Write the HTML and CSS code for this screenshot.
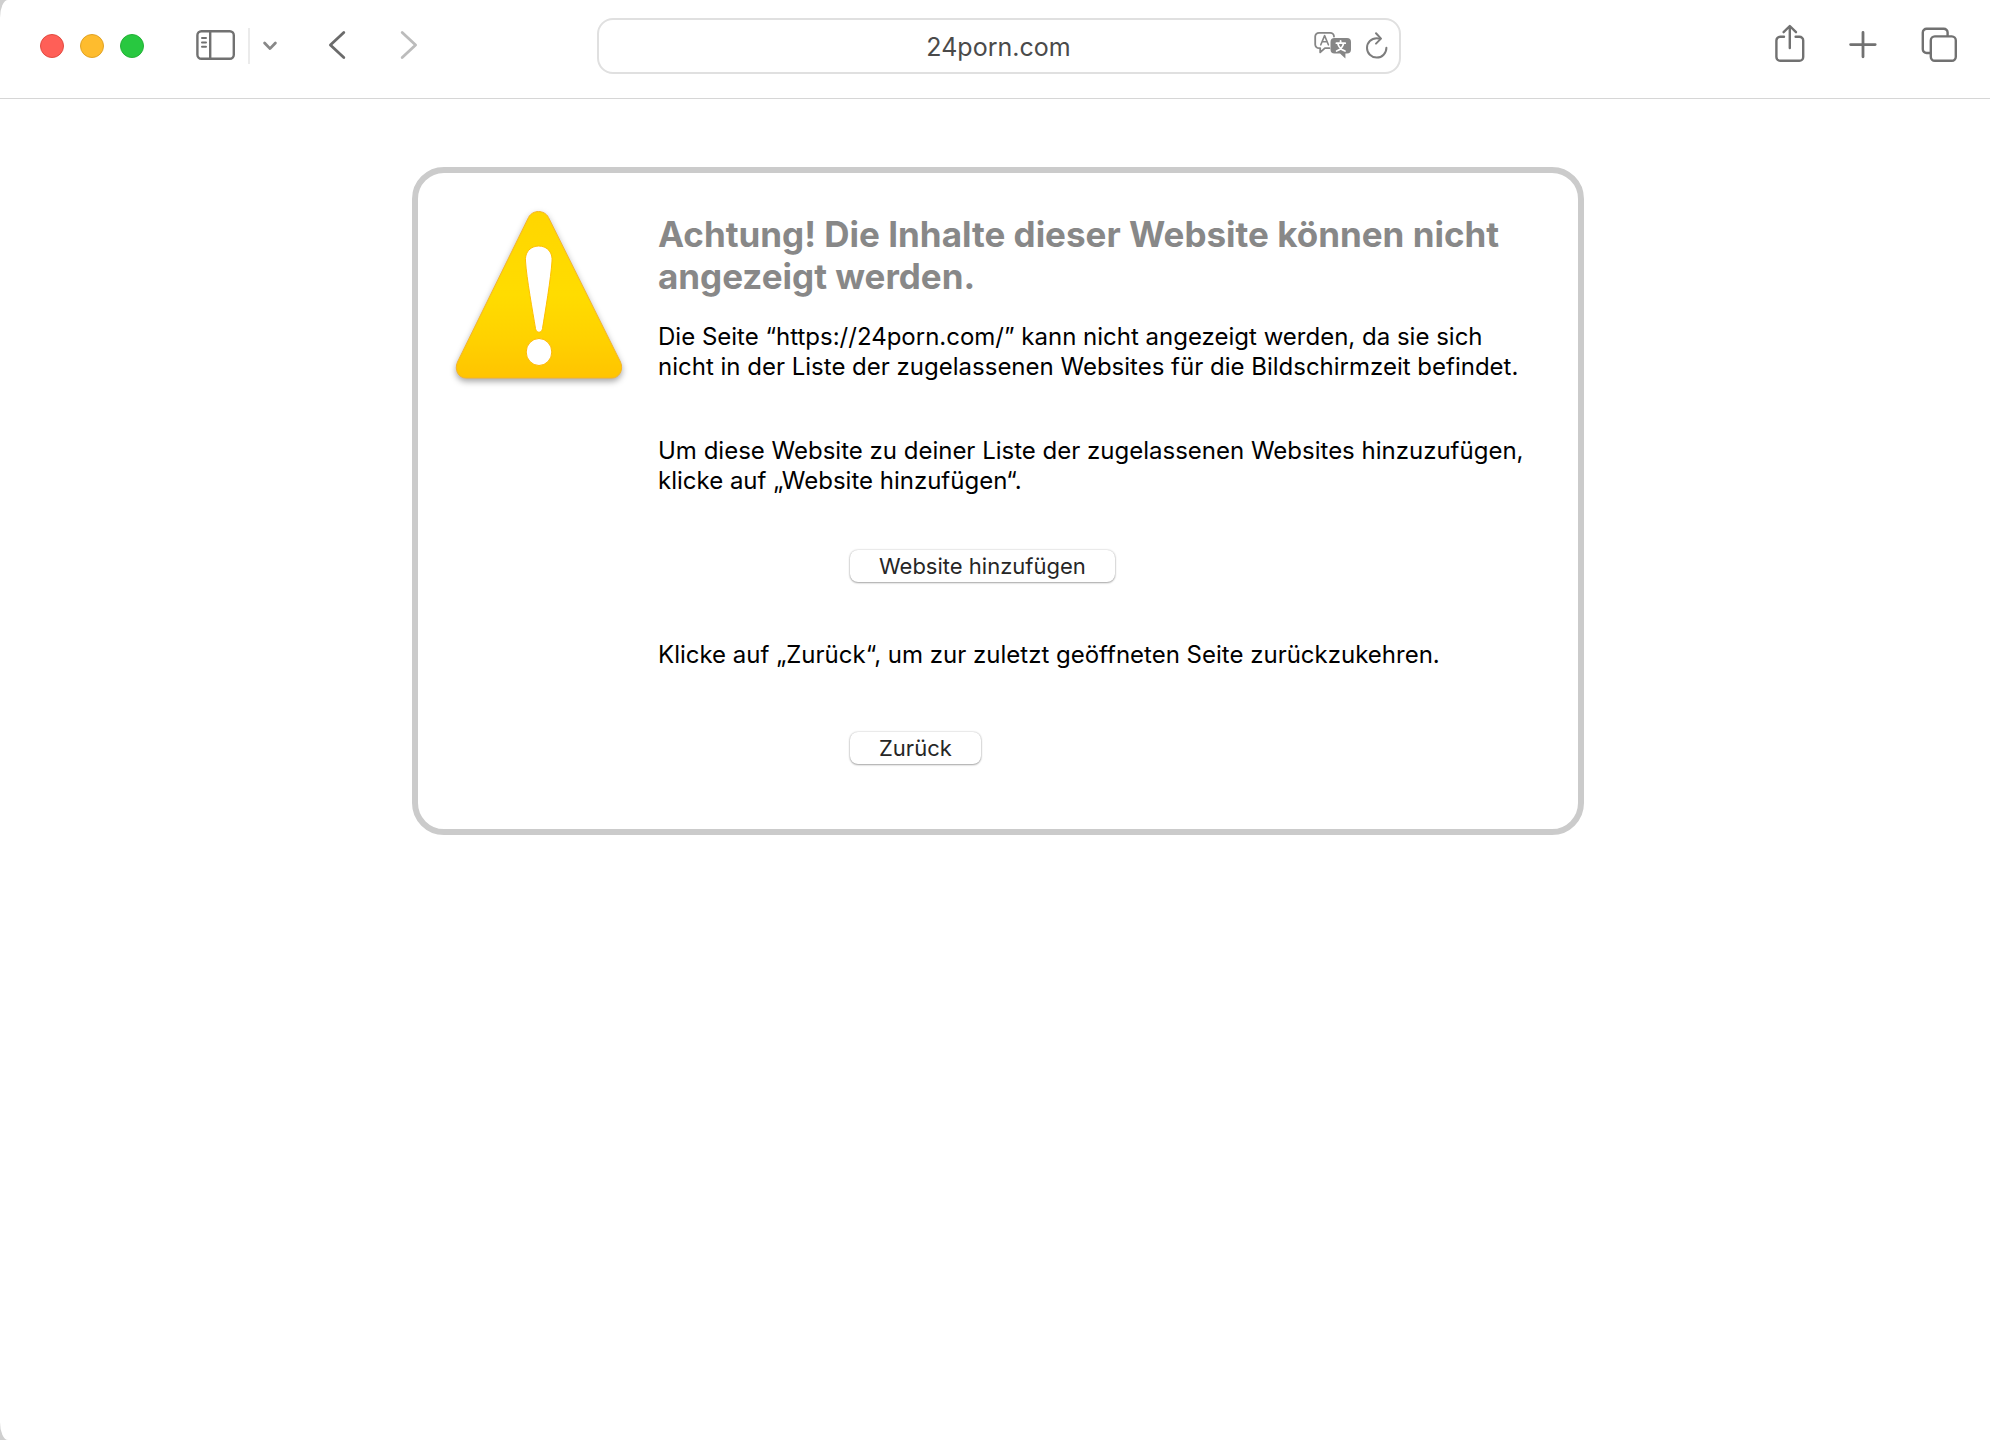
FILE: index.html
```
<!DOCTYPE html>
<html lang="de">
<head>
  <meta charset="UTF-8">
  <title>24porn.com</title>
  <link rel="stylesheet" href="styles.css">
</head>
<body>

<div class="window">
  <header class="toolbar">
    <div class="toolbar-left">
      <div class="lights">
        <button class="light red" aria-label="Schließen"></button>
        <button class="light yellow" aria-label="Minimieren"></button>
        <button class="light green" aria-label="Vollbild"></button>
      </div>
      <div class="sidebar-group">
        <button class="icon-btn" aria-label="Seitenleiste">
          <svg width="40" height="32" viewBox="0 0 40 32" fill="none" stroke="#717171" stroke-width="2.4" stroke-linecap="round">
            <rect x="1.4" y="1.2" width="36.4" height="27.6" rx="4"/>
            <path d="M14.2 1.2v27.6"/>
            <path d="M6 7.9h4M6 12.4h4M6 16.8h4" stroke-width="2"/>
          </svg>
        </button>
        <span class="divider"></span>
        <button class="icon-btn" aria-label="Tabgruppen">
          <svg width="16" height="32" viewBox="0 0 16 32" fill="none" stroke="#888" stroke-width="2.8" stroke-linecap="round" stroke-linejoin="round">
            <path d="M2.6 13L8 18.600l5.400-5.600"/>
          </svg>
        </button>
      </div>
      <div class="nav-group">
        <button class="icon-btn" aria-label="Zurück">
          <svg width="18" height="32" viewBox="0 0 18 32" fill="none" stroke="#6b6b6b" stroke-width="2.8" stroke-linecap="round" stroke-linejoin="round">
            <path d="M15.8 2.400L2.400 15l13.400 12.600"/>
          </svg>
        </button>
        <button class="icon-btn" aria-label="Vorwärts" disabled>
          <svg width="18" height="32" viewBox="0 0 18 32" fill="none" stroke="#bcbcbc" stroke-width="2.8" stroke-linecap="round" stroke-linejoin="round">
            <path d="M2.200 2.400l13.400 12.600L2.200 27.600"/>
          </svg>
        </button>
      </div>
    </div>

    <div class="address">
      <input class="address-input" type="text" value="24porn.com" aria-label="Adresse">
      <div class="address-icons">
        <button class="icon-btn" aria-label="Übersetzen">
          <svg width="38" height="30" viewBox="0 0 38 30" fill="none" stroke="#868686" stroke-width="1.8" stroke-linecap="round" stroke-linejoin="round">
            <path d="M15.500 17.200h-4.600L6.200 21.400v-4.200H5A3.800 3.800 0 0 1 1.200 13.400V5.600A3.800 3.800 0 0 1 5 1.800h11.200A3.800 3.800 0 0 1 20 5.600"/>
            <path d="M6.800 13.800L10.600 4.600l3.800 9.200M8.200 10.800h4.800" stroke-width="1.6"/>
            <path d="M20.500 7h12.500a4 4 0 0 1 4 4v7.500a4 4 0 0 1-4 4h-1.600V27.600l-5.400-5.100h-5.500a4 4 0 0 1-4-4V11a4 4 0 0 1 4-4z" fill="#868686" stroke="none"/>
            <path d="M22.400 12.200h8.800M26.600 10v2.200M29.600 12.400c-.8 3.600-3.400 6.400-7 7.600M23.800 12.400c.8 3.600 3.600 6.400 7.200 7.600" stroke="#fff" stroke-width="1.8"/>
          </svg>
        </button>
        <button class="icon-btn" aria-label="Neu laden">
          <svg width="24" height="30" viewBox="0 0 24 30" fill="none" stroke="#7d7d7d" stroke-width="2" stroke-linecap="round" stroke-linejoin="round">
            <path d="M21.400 16.800a9.700 9.700 0 1 1-9.700-9.600c1.200 0 2.200.1 3.300.5"/>
            <path d="M11 2.200l5 5.400-5 5"/>
          </svg>
        </button>
      </div>
    </div>

    <div class="toolbar-right">
      <button class="icon-btn" aria-label="Teilen">
        <svg width="30" height="40" viewBox="0 0 30 40" fill="none" stroke="#717171" stroke-width="2.4" stroke-linecap="round" stroke-linejoin="round">
          <path d="M9 10.800H5.200a3.800 3.800 0 0 0-3.800 3.800v16.400A3.800 3.800 0 0 0 5.200 34.800h19.200a3.800 3.800 0 0 0 3.800-3.800V14.600a3.800 3.800 0 0 0-3.800-3.800H20.600"/>
          <path d="M14.800 22V.6M8.600 6.200l6.200-6.200 6.200 6.200"/>
        </svg>
      </button>
      <button class="icon-btn" aria-label="Neuer Tab">
        <svg width="28" height="30" viewBox="0 0 28 30" fill="none" stroke="#717171" stroke-width="2.8" stroke-linecap="round">
          <path d="M14 1.400v24.400M1.600 13.600h24.600"/>
        </svg>
      </button>
      <button class="icon-btn" aria-label="Tabübersicht">
        <svg width="36" height="38" viewBox="0 0 36 38" fill="none" stroke="#717171" stroke-width="2.4" stroke-linejoin="round">
          <path d="M9.200 26H5.600a3.800 3.800 0 0 1-3.800-3.800V5.600a3.800 3.800 0 0 1 3.800-3.800h17.200A3.800 3.800 0 0 1 26.600 5.600v3.600"/>
          <rect x="9.800" y="9.400" width="25" height="24.400" rx="4"/>
        </svg>
      </button>
    </div>
  </header>

  <main class="page">
    <section class="notice">
      <svg class="warning" width="180" height="190" viewBox="0 0 180 190" aria-hidden="true">
        <defs>
          <linearGradient id="yellow" x1="0" y1="0" x2="0" y2="1">
            <stop offset="0" stop-color="#ffd600"/>
            <stop offset="0.5" stop-color="#ffdc00"/>
            <stop offset="0.75" stop-color="#ffd200"/>
            <stop offset="1" stop-color="#ffc400"/>
          </linearGradient>
        </defs>
        <path class="triangle" d="M78.500 12.500C82.500 4.500 94.500 4.500 98.500 12.500L170.500 157C174 165 169 173 162 173H16C8.500 173 4 165 7.500 157Z" fill="url(#yellow)" stroke="#f5b429" stroke-width="1"/>
        <path d="M75.500 56C74 36 103.500 36 102 56C101 73 95 108 92.500 123.500C91.700 128.500 86.300 128.500 85.500 123.500C83 108 76.500 73 75.500 56Z" fill="#fff" stroke="#ffc000" stroke-width="1"/>
        <ellipse cx="89" cy="147" rx="12.800" ry="13.500" fill="#fff" stroke="#ffb800" stroke-width="1"/>
      </svg>
      <div class="notice-text">
        <h1>Achtung! Die Inhalte dieser Website können nicht angezeigt werden.</h1>
        <p>Die Seite “https://24porn.com/” kann nicht angezeigt werden, da sie sich nicht in der Liste der zugelassenen Websites für die Bildschirmzeit befindet.</p>
        <p>Um diese Website zu deiner Liste der zugelassenen Websites hinzuzufügen, klicke auf „Website hinzufügen“.</p>
        <button class="push-btn">Website hinzufügen</button>
        <p>Klicke auf „Zurück“, um zur zuletzt geöffneten Seite zurückzukehren.</p>
        <button class="push-btn">Zurück</button>
      </div>
    </section>
  </main>
</div>

</body>
</html>
```
FILE: styles.css
```
html, body {
  margin: 0;
  padding: 0;
  height: 100%;
  font-family: Inter, "Liberation Sans", sans-serif;
  background: #cfcfcf;
}

.window {
  min-height: 100%;
  background: #fff;
  border-radius: 8px 0 0 8px / 18px 0 0 18px;
}

button {
  font-family: inherit;
  border: none;
  padding: 0;
  background: none;
}

svg {
  overflow: visible;
}

.toolbar {
  display: grid;
  grid-template-columns: 1fr minmax(300px, 804px) 1fr;
  align-items: center;
  padding: 18px 33px 24px 40px;
  border-bottom: 1px solid #d6d6d6;
}

.toolbar-left,
.lights,
.sidebar-group,
.nav-group,
.toolbar-right {
  display: flex;
  align-items: center;
}

.lights {
  gap: 16px;
}

.light {
  box-sizing: border-box;
  width: 24px;
  height: 24px;
  border-radius: 50%;
}

.red {
  background: #ff5f57;
  border: 1px solid #e24b41;
}

.yellow {
  background: #febc2e;
  border: 1px solid #e1a325;
}

.green {
  background: #28c840;
  border: 1px solid #24b137;
}

.icon-btn {
  display: flex;
}

.sidebar-group {
  gap: 12px;
  margin-left: 52px;
}

.divider {
  width: 2px;
  height: 36px;
  background: #ebebeb;
}

.nav-group {
  gap: 54px;
  margin-left: 50px;
}

.address {
  position: relative;
}

.address-input {
  box-sizing: border-box;
  display: block;
  width: 100%;
  height: 56px;
  padding: 2px 90px 0;
  border: 2px solid #e0e0e0;
  border-radius: 16px;
  background: #fff;
  font-family: inherit;
  font-size: 25px;
  color: #4a4a4a;
  text-align: center;
}

.address-icons {
  position: absolute;
  top: 0;
  right: 12px;
  height: 100%;
  display: flex;
  align-items: center;
  gap: 13px;
}

.toolbar-right {
  justify-content: flex-end;
  gap: 44px;
}

.page {
  padding: 68px 0 0 6px;
}

.notice {
  box-sizing: border-box;
  display: flex;
  gap: 28px;
  max-width: 1172px;
  margin: 0 auto;
  padding: 32px 50px 65px 32px;
  border: 6px solid #cbcbcb;
  border-radius: 32px;
}

.warning {
  flex: none;
}

.triangle {
  filter: drop-shadow(0 3px 3px rgba(0, 0, 0, 0.35));
}

.notice-text {
  flex: 1;
  padding-top: 8px;
}

.notice-text h1 {
  margin: 0 0 25px;
  font-size: 35px;
  line-height: 42px;
  color: #888;
}

.notice-text p {
  margin: 0 0 54px;
  font-size: 24px;
  line-height: 30px;
  color: #000;
}

.push-btn {
  display: block;
  height: 32px;
  margin: 0 0 58px 192px;
  padding: 0 29px;
  border-radius: 8px;
  background: #fff;
  box-shadow: 0 0 2px rgba(0, 0, 0, 0.25), 0 1px 2px rgba(0, 0, 0, 0.3);
  font-size: 22px;
  color: #262626;
}

.push-btn:last-child {
  margin-top: 62px;
  margin-bottom: 0;
}
```
